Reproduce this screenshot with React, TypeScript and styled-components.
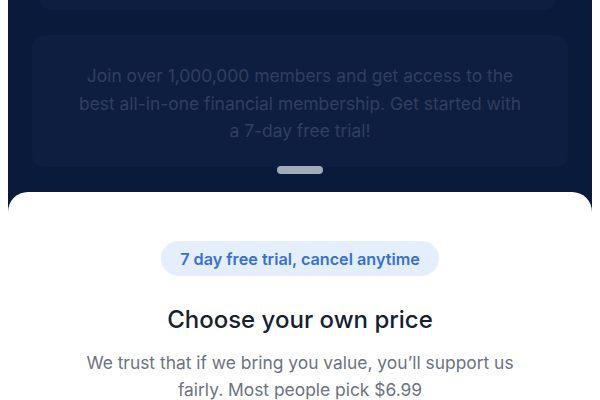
import styled, { createGlobalStyle } from "styled-components";

const GlobalStyle = createGlobalStyle`
  html, body {
    margin: 0;
    padding: 0;
    background: #ffffff;
  }
  body {
    padding: 0 8px;
    font-family: Inter, "Noto Sans", sans-serif;
  }
`;

const Screen = styled.div`
  height: 400px;
  overflow: hidden;
  background: #0a1a3b;
  display: flex;
  flex-direction: column;
`;

const Backdrop = styled.div`
  display: flex;
  flex-direction: column;
  align-items: center;
  padding: 0 24px;
`;

const PeekCard = styled.div`
  align-self: stretch;
  margin: 0 12px 0 8px;
  height: 10px;
  border-radius: 0 0 12px 12px;
  background: #0d1e41;
`;

const PromoCard = styled.div`
  align-self: stretch;
  margin-top: 25px;
  height: 132px;
  box-sizing: border-box;
  padding: 27px 44px 0;
  border-radius: 12px;
  background: #0d1e41;
  text-align: center;
  font-size: 17.4px;
  line-height: 27.5px;
  font-weight: 400;
  color: #313f60;
`;

const Handle = styled.div`
  width: 46px;
  height: 8px;
  margin-top: -1px;
  border-radius: 4px;
  background: #a2abbb;
`;

const Sheet = styled.div`
  margin-top: 18px;
  flex: 1;
  background: #ffffff;
  border-radius: 20px 20px 0 0;
  display: flex;
  flex-direction: column;
  align-items: center;
  padding-top: 49px;
`;

const Badge = styled.div`
  height: 35px;
  padding: 0 19px;
  border-radius: 18px;
  background: #e5effc;
  color: #3771d0;
  font-size: 16.2px;
  font-weight: 600;
  display: flex;
  align-items: center;
`;

const Title = styled.h2`
  margin: 29px 0 0;
  font-size: 24px;
  line-height: 30px;
  font-weight: 500;
  color: #161f33;
`;

const Subtitle = styled.p`
  margin: 14px 0 0;
  max-width: 440px;
  text-align: center;
  font-size: 17.4px;
  line-height: 27px;
  color: #6c7381;
`;

export default function App() {
  return (
    <>
      <GlobalStyle />
      <Screen>
        <Backdrop>
          <PeekCard />
          <PromoCard>
            Join over 1,000,000 members and get access to the best
            all-in-one financial membership. Get started with a 7-day free
            trial!
          </PromoCard>
          <Handle />
        </Backdrop>
        <Sheet>
          <Badge>7 day free trial, cancel anytime</Badge>
          <Title>Choose your own price</Title>
          <Subtitle>
            We trust that if we bring you value, you’ll support us fairly.
            Most people pick $6.99
          </Subtitle>
        </Sheet>
      </Screen>
    </>
  );
}
